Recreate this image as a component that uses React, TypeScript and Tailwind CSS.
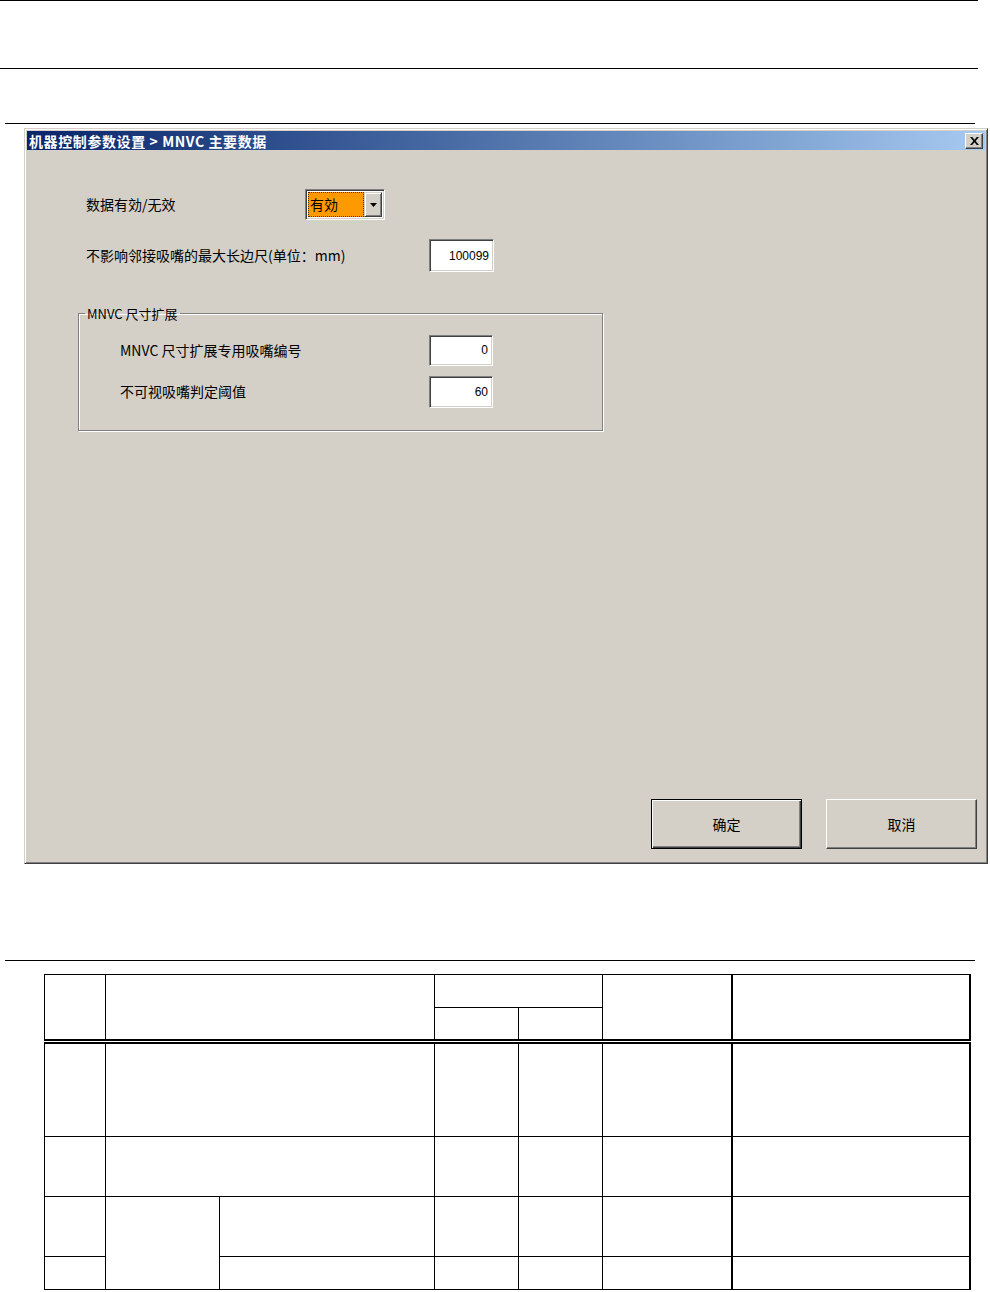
import React from 'react'

const cjk = { fontFamily: '"Noto Sans CJK SC", "Liberation Sans", sans-serif' }

function Sunken({ value, className = '' }: { value: string; className?: string }) {
  return (
    <div
      className={`flex items-center justify-end bg-white pr-[4px] text-[12px] text-black border border-t-[#808080] border-l-[#808080] border-r-white border-b-white shadow-[inset_1px_1px_0_#404040,inset_-1px_-1px_0_#d4d0c8] ${className}`}
      style={{ fontFamily: '"Liberation Sans", Arial, sans-serif' }}
    >
      {value}
    </div>
  )
}

function Dropdown() {
  return (
    <div className="flex h-[31px] w-[80px] items-stretch bg-white p-[2px] border border-t-[#808080] border-l-[#808080] border-r-white border-b-white shadow-[inset_1px_1px_0_#404040,inset_-1px_-1px_0_#d4d0c8]">
      <div className="flex flex-1 items-center bg-[#ff9900] pl-[2px] text-[14px] text-black outline-1 outline-dotted outline-[#333] -outline-offset-1">
        有効
      </div>
      <div className="flex w-[18px] items-center justify-center bg-[#d4d0c8] border border-t-[#d4d0c8] border-l-[#d4d0c8] border-r-[#404040] border-b-[#404040] shadow-[inset_1px_1px_0_#fff,inset_-1px_-1px_0_#808080]">
        <svg width="7" height="4" viewBox="0 0 7 4">
          <path d="M0 0h7L3.5 4z" fill="#000" />
        </svg>
      </div>
    </div>
  )
}

function Button({ label, isDefault }: { label: string; isDefault?: boolean }) {
  return (
    <div
      className={`flex h-[50px] w-[151px] items-center justify-center bg-[#d4d0c8] text-[14px] text-black ${
        isDefault
          ? 'border border-black shadow-[inset_1px_1px_0_#fff,inset_-1px_-1px_0_#404040,inset_-2px_-2px_0_#808080]'
          : 'border border-t-white border-l-white border-r-[#404040] border-b-[#404040] shadow-[inset_-1px_-1px_0_#808080]'
      }`}
    >
      {label}
    </div>
  )
}

function Dialog() {
  return (
    <div className="ml-[24px] flex h-[736px] w-[964px] flex-col bg-[#d4d0c8] p-[2px] border border-t-[#d4d0c8] border-l-[#d4d0c8] border-r-[#404040] border-b-[#404040] shadow-[inset_1px_1px_0_#fff,inset_-1px_-1px_0_#808080]">
      {/* 标题栏 */}
      <div className="flex h-[19px] items-center justify-between bg-gradient-to-r from-[#0a246a] to-[#a6caf0] pl-[2px] pr-[2px]">
        <span className="text-[14px] font-bold tracking-[0.6px] text-white leading-none">机器控制参数设置 &gt; MNVC 主要数据</span>
        <div className="flex h-[16px] w-[18px] items-center justify-center bg-[#d4d0c8] border border-t-white border-l-white border-r-[#404040] border-b-[#404040] shadow-[inset_-1px_-1px_0_#808080]">
          <svg width="9" height="8" viewBox="0 0 9 8">
            <path d="M0 0h2.2l2.3 2.7L6.8 0H9L5.6 4 9 8H6.8L4.5 5.3 2.2 8H0l3.4-4z" fill="#000" />
          </svg>
        </div>
      </div>

      {/* 内容 */}
      <div className="flex flex-1 flex-col pl-[59px] pt-[39px]">
        <div className="flex items-center">
          <span className="w-[219px] text-[14px] text-black">数据有効/无效</span>
          <Dropdown />
        </div>
        <div className="mt-[19px] flex items-center">
          <span className="w-[343px] text-[14px] text-black">不影响邻接吸嘴的最大长边尺(单位：mm)</span>
          <Sunken value="100099" className="h-[33px] w-[65px]" />
        </div>

        <fieldset className="-ml-[8px] mt-[32px] h-[127px] w-[525px] border border-[#808080] shadow-[1px_1px_0_#fff,inset_1px_1px_0_#fff] p-0">
          <legend className="ml-[6px] px-[2px] text-[13px] text-black">MNVC 尺寸扩展</legend>
          <div className="pl-[41px] pt-[11px]">
            <div className="flex items-center">
              <span className="w-[309px] text-[14px] text-black">MNVC 尺寸扩展专用吸嘴编号</span>
              <Sunken value="0" className="h-[31px] w-[64px]" />
            </div>
            <div className="mt-[10px] flex items-center">
              <span className="w-[309px] text-[14px] text-black">不可视吸嘴判定阈值</span>
              <Sunken value="60" className="h-[32px] w-[64px]" />
            </div>
          </div>
        </fieldset>

        <div className="mt-auto mb-[12px] flex justify-end gap-[24px] pr-[8px]">
          <Button label="确定" isDefault />
          <Button label="取消" />
        </div>
      </div>
    </div>
  )
}

function DataTable() {
  const td = 'border border-black p-0'
  return (
    <table className="ml-[44px] w-[925px] border-collapse table-fixed">
      <colgroup>
        <col className="w-[61px]" />
        <col className="w-[114px]" />
        <col className="w-[215px]" />
        <col className="w-[84px]" />
        <col className="w-[84px]" />
        <col className="w-[129px]" />
        <col className="w-[238px]" />
      </colgroup>
      <tbody>
        <tr className="h-[33px]">
          <td rowSpan={2} className={`${td} border-b-[5px] border-double`} />
          <td rowSpan={2} colSpan={2} className={`${td} border-b-[5px] border-double`} />
          <td colSpan={2} className={td} />
          <td rowSpan={2} className={`${td} border-b-[5px] border-double`} />
          <td rowSpan={2} className={`${td} border-b-[5px] border-double border-l-2 border-r-2`} />
        </tr>
        <tr className="h-[34px]">
          <td className={`${td} border-b-[5px] border-double`} />
          <td className={`${td} border-b-[5px] border-double`} />
        </tr>
        <tr className="h-[95px]">
          <td className={td} />
          <td colSpan={2} className={td} />
          <td className={td} />
          <td className={td} />
          <td className={td} />
          <td className={`${td} border-l-2 border-r-2`} />
        </tr>
        <tr className="h-[60px]">
          <td className={td} />
          <td colSpan={2} className={td} />
          <td className={td} />
          <td className={td} />
          <td className={td} />
          <td className={`${td} border-l-2 border-r-2`} />
        </tr>
        <tr className="h-[60px]">
          <td className={td} />
          <td rowSpan={2} className={td} />
          <td className={`${td} border-l-[#555]`} />
          <td className={td} />
          <td className={td} />
          <td className={td} />
          <td className={`${td} border-l-2 border-r-2`} />
        </tr>
        <tr className="h-[33px]">
          <td className={td} />
          <td className={td} />
          <td className={td} />
          <td className={td} />
          <td className={td} />
          <td className={`${td} border-l-2 border-r-2`} />
        </tr>
      </tbody>
    </table>
  )
}

export default function App() {
  return (
    <div className="relative h-[1292px] w-[990px] overflow-hidden bg-white" style={cjk}>
      <div className="h-[1px] w-[978px] bg-black" />
      <div className="mt-[67px] h-[1px] w-[978px] bg-black" />
      <div className="ml-[5px] mt-[54px] h-[1px] w-[970px] bg-black" />
      <div className="mt-[4px]">
        <Dialog />
      </div>
      <div className="ml-[5px] mt-[96px] h-[1px] w-[970px] bg-black" />
      <div className="mt-[13px]">
        <DataTable />
      </div>
    </div>
  )
}
